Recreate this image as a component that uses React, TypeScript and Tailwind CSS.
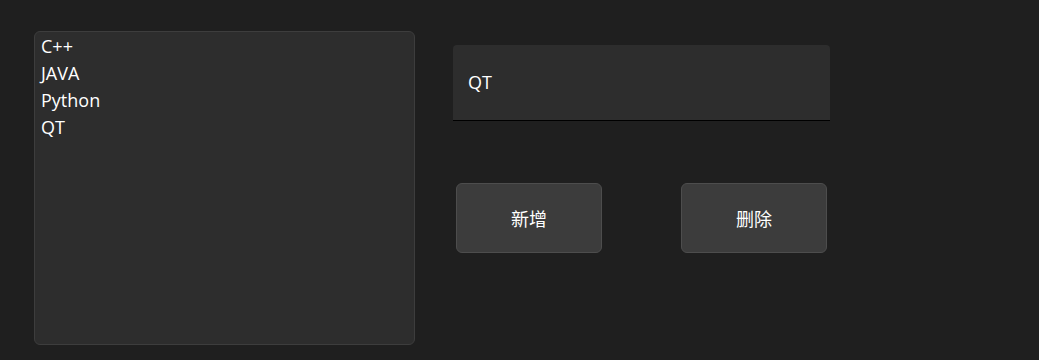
import React from "react";

const font = { fontFamily: '"Open Sans", "Noto Sans CJK SC", sans-serif' };

export default function App() {
  const items = ["C++", "JAVA", "Python", "QT"];
  return (
    <div className="w-[1039px] h-[360px] bg-[#1f1f1f] text-white flex" style={font}>
      <div className="pl-[34px] pt-[31px]">
        <div className="w-[381px] h-[314px] bg-[#2d2d2d] border border-[#3d3d3d] rounded-[6px] pl-[6px] pt-[1px] text-[18px] leading-[27px]">
          {items.map((it) => (
            <div key={it}>{it}</div>
          ))}
        </div>
      </div>
      <div className="ml-[38px] flex flex-col">
        <div className="mt-[45px] w-[377px] h-[76px] bg-[#2d2d2d] rounded-t-[4px] border-b border-b-black flex items-center pl-[15px] text-[18px]">
          QT
        </div>
        <div className="mt-[62px] ml-[3px] flex gap-[79px]">
          <button className="w-[146px] h-[70px] bg-[#3c3c3c] border border-[#4d4d4d] rounded-[6px] text-[18px] leading-[24px] pt-[2px] text-white">
            新增
          </button>
          <button className="w-[146px] h-[70px] bg-[#3c3c3c] border border-[#4d4d4d] rounded-[6px] text-[18px] leading-[24px] pt-[2px] text-white">
            删除
          </button>
        </div>
      </div>
    </div>
  );
}
